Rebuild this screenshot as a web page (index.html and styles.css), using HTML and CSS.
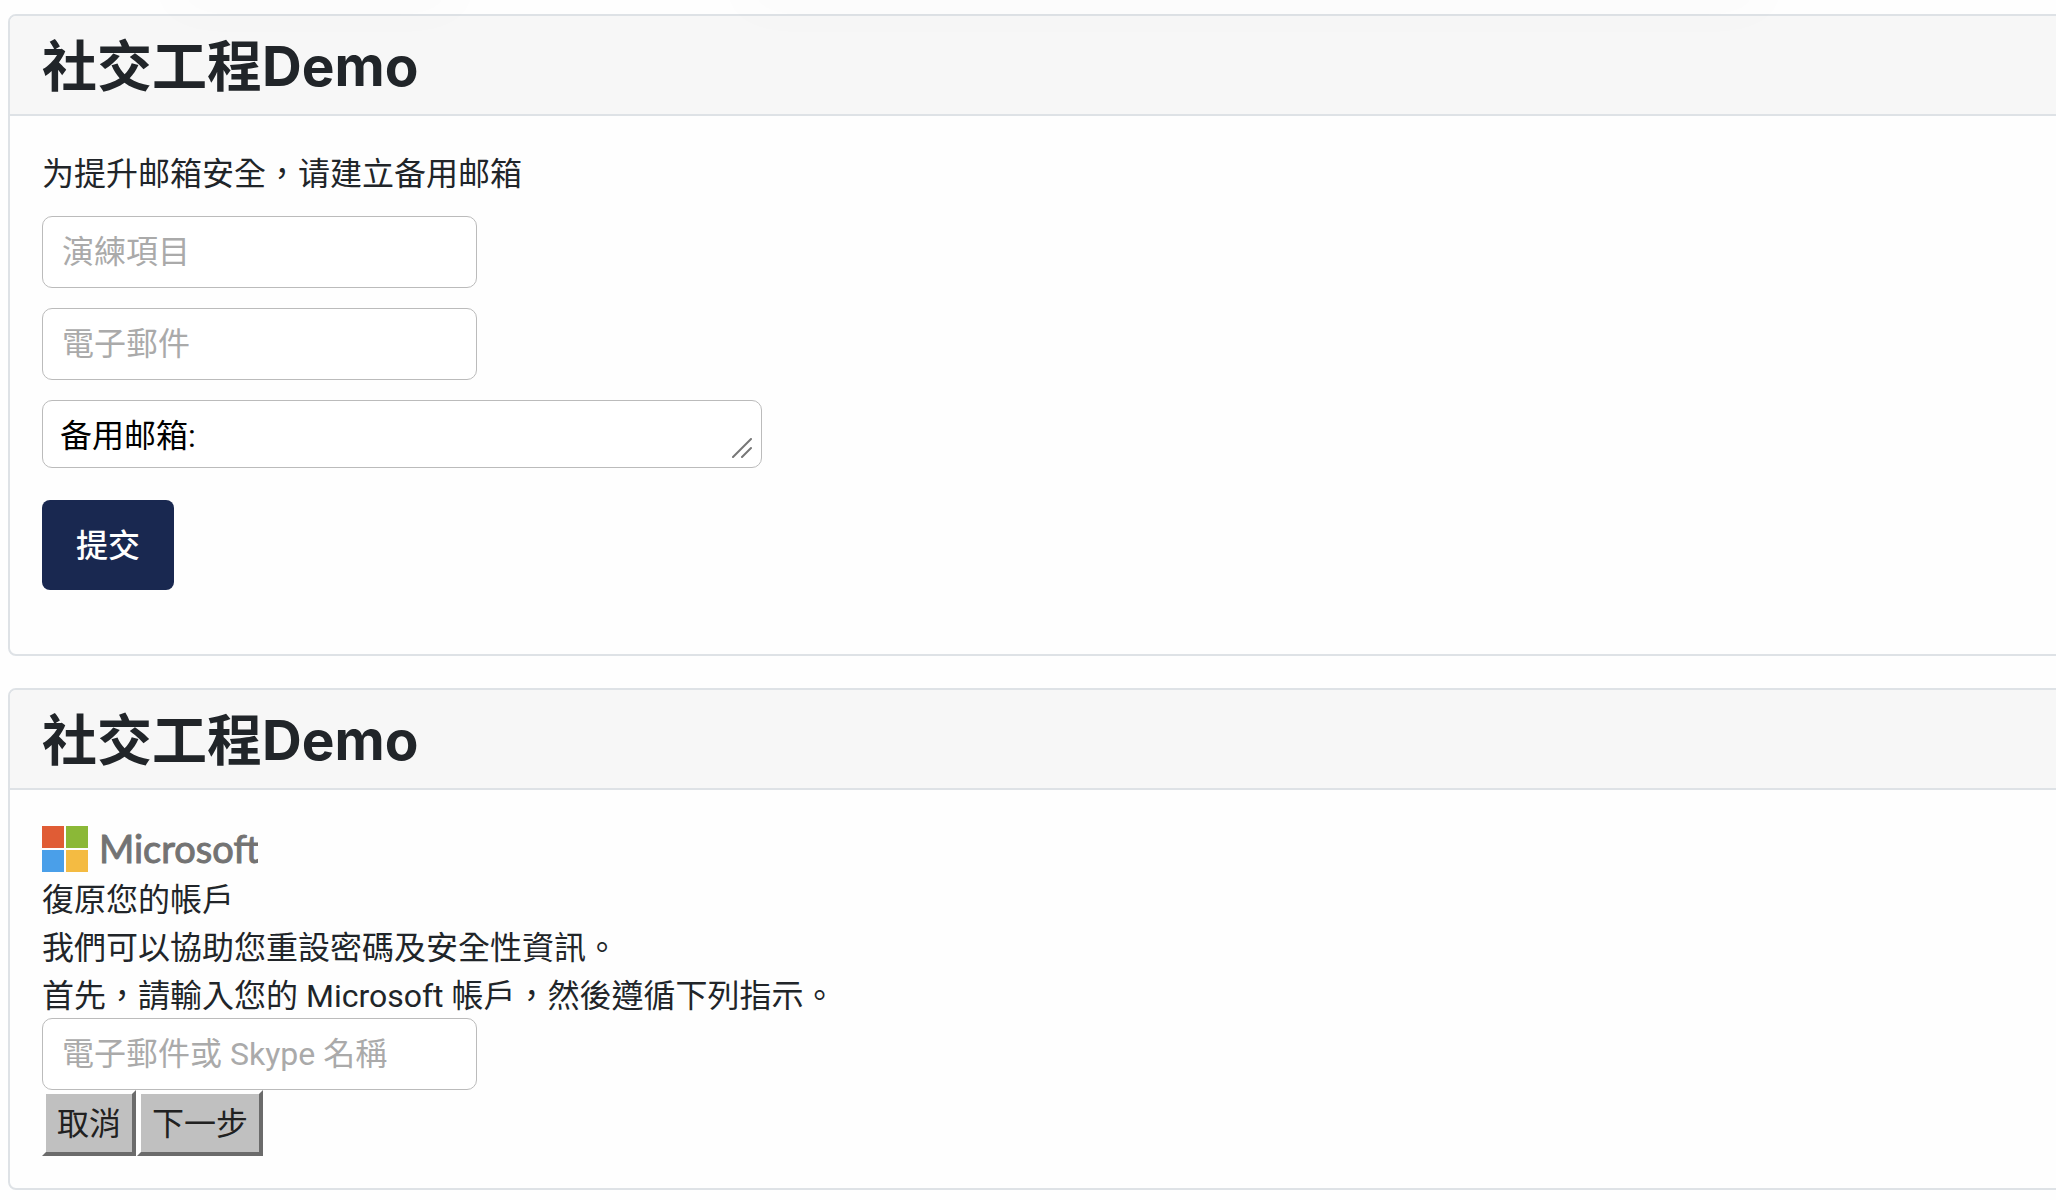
FILE: index.html
```html
<!DOCTYPE html>
<html lang="zh-Hant">
<head>
	<title>社交工程Demo</title>
	<meta charset="utf-8">
	<meta name="viewport" content="width=device-width, initial-scale=1">
	<link rel="stylesheet" href="styles.css">
</head>
<body>
	<div class="card">
		<div class="card-header">
			<h2>社交工程Demo</h2>
		</div>
		<form class="card-body mail-form">
			<p>为提升邮箱安全，请建立备用邮箱</p>
			<input type="text" class="field" placeholder="演練項目" aria-label="演練項目">
			<input type="email" class="field" placeholder="電子郵件" aria-label="電子郵件">
			<div class="area">
				<textarea rows="1" aria-label="备用邮箱">备用邮箱:</textarea>
				<svg class="grip" viewBox="0 0 20 20" aria-hidden="true">
					<path d="M1 19L19 1M10 19L19 10"/>
				</svg>
			</div>
			<button type="button" class="submit">提交</button>
		</form>
	</div>

	<div class="card">
		<div class="card-header">
			<h2>社交工程Demo</h2>
		</div>
		<form class="card-body">
			<svg class="logo" viewBox="0 0 216 46" role="img" aria-label="Microsoft">
				<path fill="#e05c35" d="M0 0h22v22H0z"/>
				<path fill="#8bb837" d="M24 0h22v22H24z"/>
				<path fill="#4a9fe9" d="M0 24h22v22H0z"/>
				<path fill="#f4bb42" d="M24 24h22v22H24z"/>
				<text x="57" y="37">Microsoft</text>
			</svg>
			<p>復原您的帳戶</p>
			<p>我們可以協助您重設密碼及安全性資訊。</p>
			<p>首先，請輸入您的 Microsoft 帳戶，然後遵循下列指示。</p>
			<input type="text" class="field" placeholder="電子郵件或 Skype 名稱" aria-label="電子郵件或 Skype 名稱">
			<div class="actions">
				<button type="button" class="plain">取消</button>
				<button type="button" class="plain">下一步</button>
			</div>
		</form>
	</div>
</body>
</html>
```

FILE: styles.css
```css
* {
	box-sizing: border-box;
}

html {
	overflow-x: hidden;
}

body {
	margin: 0;
	padding: 14px 0 10px 8px;
	background-color: #fefefe;
	color: #212529;
	font-family: Roboto, "Noto Sans CJK TC", sans-serif;
	font-size: 32px;
	line-height: 48px;
}

/* soft shade under the top edge */
body::before, body::after {
	content: "";
	position: absolute;
	top: -20px;
	height: 20px;
	box-shadow: 0 0 56px rgba(0,0,0,0.04);
	pointer-events: none;
}

body::before {
	left: 170px;
	width: 290px;
}

body::after {
	left: 36%;
	right: 14%;
}

h2, p {
	margin: 0;
}

h2 {
	font-family: Inter, "Noto Sans CJK TC", sans-serif;
	font-size: 55px;
	font-weight: 700;
	line-height: 66px;
}

p {
	padding-top: 4px;
	line-height: 44px;
}

input, textarea, button {
	font: inherit;
}

/* cards run off the right edge of the window */
.card {
	margin-right: -16px;
	margin-bottom: 32px;
	border: 2px solid #dee2e6;
	border-radius: 8px;
}

	.card:last-child {
		margin-bottom: 0;
	}

.card-header {
	padding: 17px 32px 15px;
	border-bottom: 2px solid #dee2e6;
	border-radius: 6px 6px 0 0;
	background-color: #f7f7f7;
}

.card-body {
	padding: 32px;
}

.mail-form {
	display: flex;
	flex-direction: column;
	align-items: flex-start;
	gap: 20px;
	padding-bottom: 64px;
}

.field, textarea {
	display: block;
	border: 1px solid #bbb;
	border-radius: 10px;
	background-color: white;
	color: black;
}

.field {
	width: 435px;
	height: 72px;
	padding: 0 19px;
}

	.field::placeholder {
		color: #aaa;
		opacity: 1;
	}

.area {
	position: relative;
	width: 720px;
	max-width: 100%;
	margin-bottom: 12px;
}

textarea {
	width: 100%;
	height: 68px;
	padding: 11px 17px 7px;
	resize: none;
	overflow: hidden;
}

.grip {
	position: absolute;
	right: 10px;
	bottom: 10px;
	width: 20px;
	height: 20px;
	fill: none;
	stroke: #777;
	stroke-width: 2;
	stroke-linecap: round;
}

.submit {
	padding: 22px 34px 20px;
	border: none;
	border-radius: 8px;
	background-color: #192850;
	color: white;
	font-weight: 500;
}

.logo {
	display: block;
	width: 216px;
	height: 46px;
	margin: 4px 0 2px;
}

	.logo text {
		fill: #737373;
		stroke: #737373;
		stroke-width: 1;
		font-family: Lato, sans-serif;
		font-size: 38px;
	}

.actions {
	display: flex;
	gap: 1px;
}

.plain {
	padding: 6px 11px 4px;
	border: 4px solid;
	border-color: #fefefe #6b6b6b #6b6b6b #fefefe;
	background-color: #c0c0c0;
	color: #212121;
}
```
